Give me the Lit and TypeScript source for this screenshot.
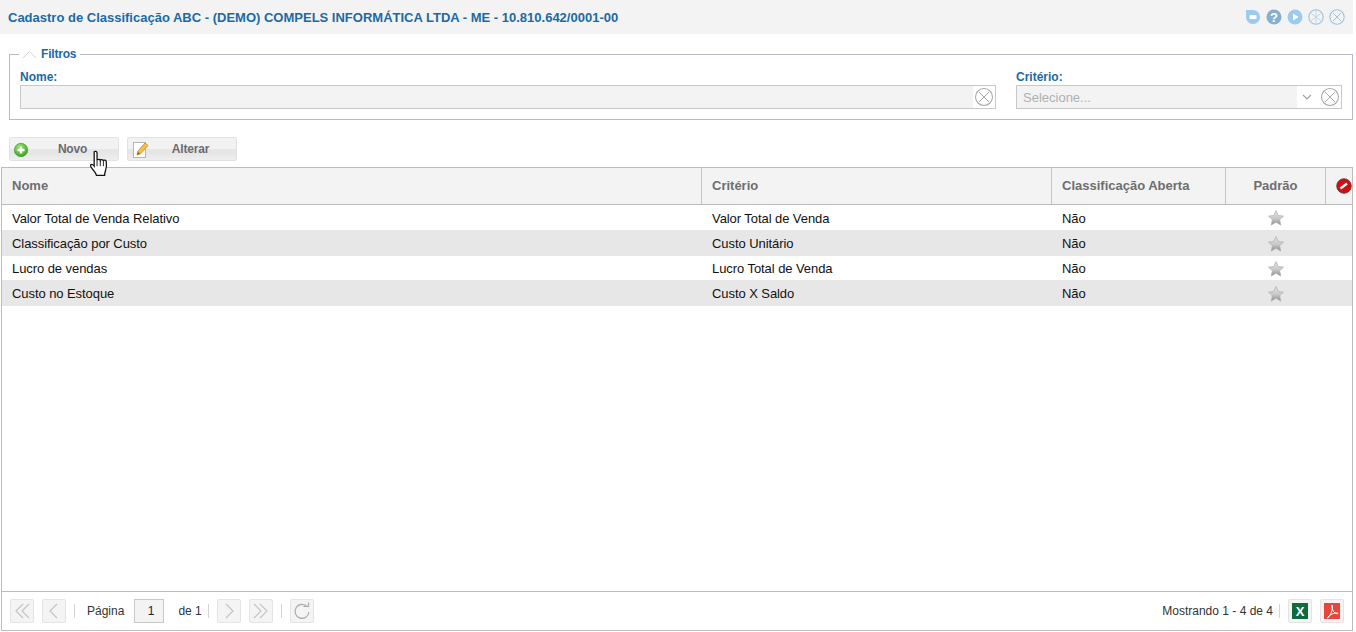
import { LitElement, html, css } from "lit";
import { customElement } from "lit/decorators.js";

const star = html`<svg width="18" height="18" viewBox="0 0 18 18"><defs><linearGradient id="st" x1="0" y1="0" x2="0" y2="1"><stop offset="0" stop-color="#e4e4e4"/><stop offset=".55" stop-color="#c8c8c8"/><stop offset="1" stop-color="#8c8c8c"/></linearGradient></defs><path d="M9 1.500l2.300 5 5.300.6-4 3.600 1.200 5.400L9 13.300l-4.800 2.800 1.200-5.400-4-3.600 5.300-.6z" fill="url(#st)" stroke="#b0b0b0" stroke-width=".7"/></svg>`;
const clear = html`<svg width="20" height="20" viewBox="0 0 20 20"><circle cx="10" cy="10" r="8.500" fill="#fff" stroke="#a9a9a9" stroke-width="1.100"/><path d="M5 5l10 10M15 5L5 15" stroke="#a9a9a9" stroke-width="1" fill="none"/></svg>`;
const chev = (d: string) => html`<svg width="22" height="24" viewBox="0 0 22 24"><path d="${d}" fill="none" stroke="#c4c4c4" stroke-width="1.200"/></svg>`;

@customElement("app-root")
export class AppRoot extends LitElement {
  static styles = css`
    :host { display: block; position: relative; width: 1356px; height: 632px; overflow: hidden; background: #fff; font-family: "Liberation Sans", Arial, sans-serif; font-size: 12px; color: #111; }
    .titlebar { height: 34px; margin-right: 3px; background: #f3f3f3; display: flex; align-items: center; justify-content: space-between; padding: 0 8px; }
    .titlebar h1 { margin: 0; font-size: 13px; font-weight: bold; color: #1b6aa5; }
    .winicons { display: flex; gap: 5px; align-items: center; }
    .winicons svg { display: block; }
    fieldset { margin: 13px 3px 0 9px; padding: 8px 10px 10px; height: 73px; box-sizing: border-box; border: 1px solid #b9b9c8; min-width: 0; }
    .filters { display: flex; gap: 20px; width: 100%; }
    legend { margin-left: -1px; padding: 0 4px 0 2px; font-weight: bold; color: #1b6aa5; font-size: 12px; letter-spacing: -.2px; line-height: 14px; display: flex; align-items: center; gap: 3px; }
    .field { display: flex; flex-direction: column; }
    .field.nome { width: 976px; }
    .field.crit { width: 326px; }
    label { font-weight: bold; color: #1b6aa5; line-height: 14px; margin-top: 1px; height: 15px; }
    .input { height: 24px; box-sizing: border-box; border: 1px solid #c8c8c8; display: flex; background: #fff; align-items: center; }
    .input .box { flex: 1; height: 100%; background: #f3f3f3; color: #b0b0b0; padding-left: 6px; line-height: 24px; font-size: 13px; }
    .input svg { display: block; flex: none; }
    .input .x { margin: 0 1px; }
    .input .dn { margin: 0 2px 0 0; }
    .actions { display: flex; gap: 8px; padding: 17px 0 6px 9px; }
    .btn { width: 110px; height: 24px; box-sizing: border-box; border: 1px solid #e2e2e2; border-radius: 2px; background: linear-gradient(#f2f2f2 0 50%, #e6e6e6 50% 70%, #efefef); display: flex; align-items: center; position: relative; color: #6b6b72; font-weight: bold; justify-content: center; padding-left: 17px; letter-spacing: -.2px; }
    .btn svg { position: absolute; left: 4px; top: 2px; }
    .grid { margin: 0 3px 0 1px; height: 464px; box-sizing: border-box; border: 1px solid #bcbcbc; display: flex; flex-direction: column; }
    .row { display: grid; grid-template-columns: 700px 350px 174px 100px 1fr; align-items: center; }
    .head { height: 36px; background: #f3f3f3; border-bottom: 1px solid #bcbcbc; box-sizing: content-box; font-weight: bold; font-size: 13px; color: #6e6e6e; }
    .head > div { height: 100%; display: flex; align-items: center; padding: 0 0 2px 10px; border-right: 1px solid #c4c4c4; box-sizing: border-box; }
    .head > div.c { justify-content: center; padding-left: 0; }
    .head > div:last-child { border-right: none; padding: 0 0 0 10px; }
    .body { flex: 1; }
    .body .row { height: 25px; box-sizing: border-box; padding-top: 1px; font-size: 13px; letter-spacing: -.07px; }
    .body .row:nth-child(even) { height: 26px; background: #e7e7e7; }
    .body .row:nth-child(3) { height: 24px; }
    .body .row > div { padding-left: 10px; }
    .body .row > div.c { padding-left: 0; display: flex; justify-content: center; }
    .pager { height: 38px; border-top: 1px solid #bcbcbc; display: flex; align-items: center; padding: 0 8px; color: #333; box-sizing: content-box; }
    .pb { width: 24px; height: 24px; box-sizing: border-box; border: 1px solid #e4e4e4; border-radius: 2px; background: #f4f4f4; display: flex; align-items: center; justify-content: center; flex: none; }
    .pb svg { display: block; }
    .sep { width: 1px; height: 14px; background: #d4d4d4; flex: none; }
    .g8 { width: 8px; flex: none; }
    .g12 { width: 12px; flex: none; }
    .g6 { width: 6px; flex: none; }
    .pg { width: 30px; height: 24px; box-sizing: border-box; border: 1px solid #c8c8c8; background: #f3f3f3; text-align: right; padding-right: 9px; line-height: 22px; color: #223; margin: 0 14px 0 10px; }
    .spacer { flex: 1; }
    .cursor { position: absolute; left: 89px; top: 150px; }
  `;

  render() {
    const rows = [
      ["Valor Total de Venda Relativo", "Valor Total de Venda"],
      ["Classificação por Custo", "Custo Unitário"],
      ["Lucro de vendas", "Lucro Total de Venda"],
      ["Custo no Estoque", "Custo X Saldo"],
    ];
    return html`
      <div class="titlebar">
        <h1>Cadastro de Classificação ABC - (DEMO) COMPELS INFORMÁTICA LTDA - ME - 10.810.642/0001-00</h1>
        <div class="winicons">
          <svg width="16" height="16" viewBox="0 0 16 16"><path d="M8 1a7 7 0 0 1 7 7c0 4-3 7-7 7a7 7 0 0 1-7-7V1z" fill="#9ccbee"/><rect x="4.500" y="6" width="7" height="4" rx="1" fill="#fff"/></svg>
          <svg width="16" height="16" viewBox="0 0 16 16"><circle cx="8" cy="8" r="7.500" fill="#86afd0"/><text x="8" y="12.500" text-anchor="middle" font-family="Liberation Sans" font-size="13" font-weight="bold" fill="#fff">?</text></svg>
          <svg width="16" height="16" viewBox="0 0 16 16"><circle cx="8" cy="8" r="7.500" fill="#9ccbee"/><path d="M6 4.500l5.500 3.500L6 11.500z" fill="#fff"/></svg>
          <svg width="16" height="16" viewBox="0 0 16 16"><circle cx="8" cy="8" r="7.200" fill="#f3f3f3" stroke="#9cc3e0" stroke-width="1.100"/><path d="M2.500 4l11 8M13.500 4l-11 8M8 1v14" fill="none" stroke="#b3d2e8" stroke-width=".8"/></svg>
          <svg width="16" height="16" viewBox="0 0 16 16"><circle cx="8" cy="8" r="7.200" fill="#f3f3f3" stroke="#9cc3e0" stroke-width="1.100"/><path d="M4 4l8 8M12 4l-8 8" stroke="#9cc3e0" stroke-width="1"/></svg>
        </div>
      </div>

      <fieldset>
        <legend><svg width="17" height="9" viewBox="0 0 17 9"><path d="M2 8l6.500-6.500L15 8" fill="none" stroke="#d4d4d4"/></svg>Filtros</legend>
        <div class="filters">
          <div class="field nome">
            <label>Nome:</label>
            <div class="input"><div class="box"></div><span class="x">${clear}</span></div>
          </div>
          <div class="field crit">
            <label>Critério:</label>
            <div class="input">
              <div class="box">Selecione...</div>
              <svg class="dn" width="20" height="20" viewBox="0 0 20 20"><path d="M6 8l4 4 4-4" fill="none" stroke="#a0a0a0" stroke-width="1.100"/></svg>
              <span class="x">${clear}</span>
            </div>
          </div>
        </div>
      </fieldset>

      <div class="actions">
        <div class="btn">
          <svg width="16" height="18" viewBox="0 0 16 18"><defs><radialGradient id="g" cx=".4" cy=".3" r=".8"><stop offset="0" stop-color="#9be86a"/><stop offset="1" stop-color="#2f9a1c"/></radialGradient></defs><circle cx="7" cy="10" r="6.700" fill="url(#g)" stroke="#3c8f2a" stroke-width=".6"/><path d="M7 6.500v7M3.500 10h7" stroke="#fff" stroke-width="2.400"/></svg>
          Novo
        </div>
        <div class="btn">
          <svg width="18" height="20" viewBox="0 0 18 20"><rect x="1.500" y="2.500" width="12" height="15" fill="#fff" stroke="#b5b5b5"/><path d="M5 15l1-4 7-8 3 2.500-7 8z" fill="#f4c04c" stroke="#c58a2a" stroke-width=".8"/><path d="M5 15l1-3 2 1.500z" fill="#7b5a30"/></svg>
          Alterar
        </div>
      </div>

      <div class="grid">
        <div class="row head">
          <div>Nome</div><div>Critério</div><div>Classificação Aberta</div><div class="c">Padrão</div>
          <div>
            <svg width="16" height="16" viewBox="0 0 16 16" style="flex:none"><circle cx="8" cy="8" r="7.300" fill="#d40d12" stroke="#444" stroke-width=".8"/><path d="M4.500 10.500L11 5.500" stroke="#fff" stroke-width="2.300"/></svg>
          </div>
        </div>
        <div class="body">
          ${rows.map(r => html`<div class="row"><div>${r[0]}</div><div>${r[1]}</div><div>Não</div><div class="c">${star}</div><div></div></div>`)}
        </div>
        <div class="pager">
          <div class="pb">${chev("M12 5l-7 7 7 7M18 5l-7 7 7 7")}</div>
          <div class="g8"></div>
          <div class="pb">${chev("M14 5l-7 7 7 7")}</div>
          <div class="g8"></div><div class="sep"></div><div class="g12"></div>
          <span>Página</span>
          <div class="pg">1</div>
          <span>de 1</span>
          <div class="g6"></div><div class="sep"></div><div class="g8"></div>
          <div class="pb">${chev("M8 5l7 7-7 7")}</div>
          <div class="g8"></div>
          <div class="pb">${chev("M4 5l7 7-7 7M10 5l7 7-7 7")}</div>
          <div class="g8"></div><div class="sep"></div><div class="g8"></div>
          <div class="pb"><svg width="20" height="20" viewBox="0 0 20 20"><path d="M15.500 6A7 7 0 1 0 17 11" fill="none" stroke="#aaa" stroke-width="1.200"/><path d="M11.500 5.500h5v-4" fill="none" stroke="#aaa" stroke-width="1.200"/></svg></div>
          <div class="spacer"></div>
          <span>Mostrando 1 - 4 de 4</span>
          <div class="g6"></div><div class="sep"></div><div class="g8"></div>
          <div class="pb"><svg width="18" height="18" viewBox="0 0 18 18"><rect x="1" y="1" width="16" height="16" fill="#0e6b3c"/><text x="9" y="14" text-anchor="middle" font-family="Liberation Sans" font-size="13" font-weight="bold" fill="#fff">X</text></svg></div>
          <div class="g8"></div>
          <div class="pb"><svg width="18" height="18" viewBox="0 0 18 18"><rect x="1" y="1" width="16" height="16" fill="#e8453c"/><path d="M9 3c-1 0 .5 5 1.500 6.500S15 12.500 15 11.500s-4-.5-6 .5-5 3.500-4.500 4S7.500 13 8.500 10 10 3 9 3z" fill="none" stroke="#fff" stroke-width="1"/></svg></div>
        </div>
      </div>

      <svg class="cursor" width="23" height="30" viewBox="0 0 20 26">
        <path d="M4.500 1.500c1-.8 2.300-.3 2.500 1V9c.2-1 2.500-1.200 2.800 0 .3-1 2.400-1 2.700.3.500-.8 2.300-.6 2.500.7.200 1.800.3 5-.4 7-.5 1.600-1 3-1 5H6.500c-.5-2-2-3.500-3.500-5.500C2 15.200.8 13.700 1.500 12.800c.7-.8 2-.2 3 1.200z" fill="#fff" stroke="#111" stroke-width="1.100"/>
        <path d="M7 9v5M9.800 9.500V14M12.500 10v4" stroke="#111" stroke-width=".8"/>
      </svg>
    `;
  }
}
